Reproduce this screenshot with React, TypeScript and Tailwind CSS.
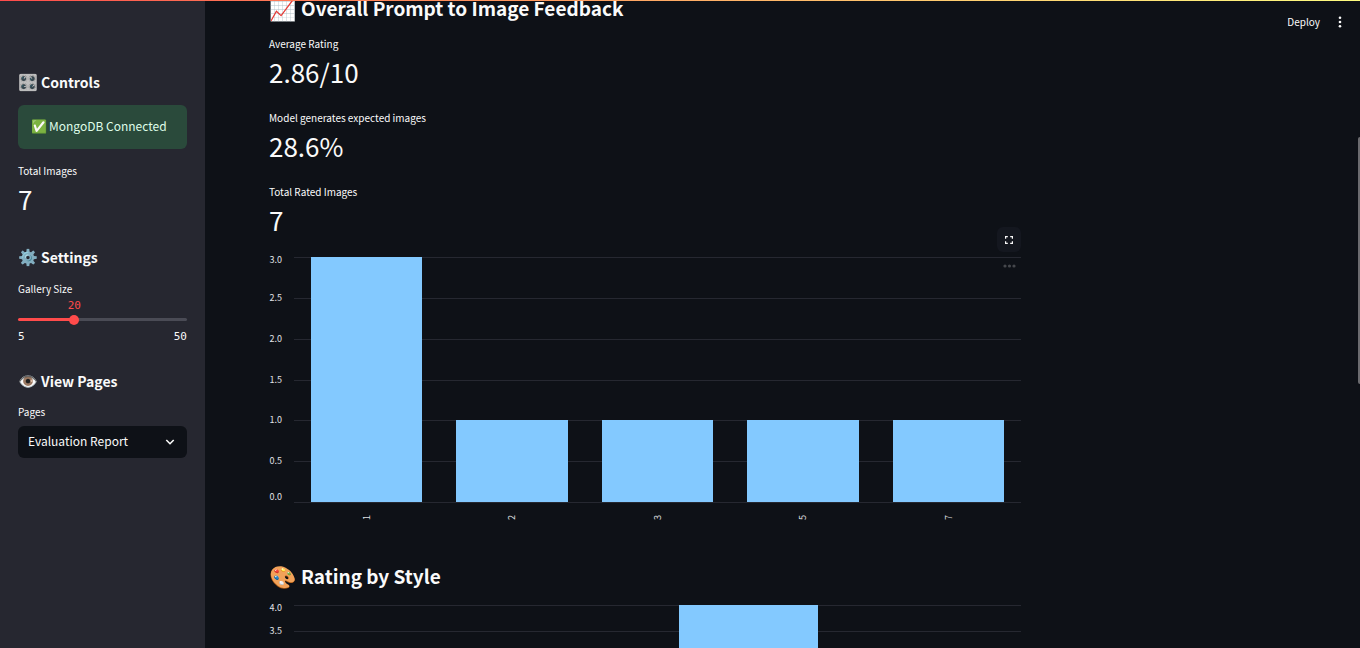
import { useState } from "react";

type Tick = { label: string; y: number; textY: number };
type Bar = { label: string; x: number; width: number; y: number };

const ratingTicks: Tick[] = [
  { label: "3.0", y: 7, textY: 13 },
  { label: "2.5", y: 48, textY: 51 },
  { label: "2.0", y: 89, textY: 92 },
  { label: "1.5", y: 130, textY: 133 },
  { label: "1.0", y: 170, textY: 173 },
  { label: "0.5", y: 211, textY: 214 },
  { label: "0.0", y: 252, textY: 250 },
];

const ratingBars: Bar[] = [
  { label: "1", x: 42, width: 111, y: 7 },
  { label: "2", x: 187, width: 112, y: 170 },
  { label: "3", x: 333, width: 111, y: 170 },
  { label: "5", x: 478, width: 112, y: 170 },
  { label: "7", x: 624, width: 111, y: 170 },
];

const styleTicks: Tick[] = [
  { label: "4.0", y: 7, textY: 13 },
  { label: "3.5", y: 33, textY: 36 },
];

const styleBars: Bar[] = [{ label: "", x: 410, width: 139, y: 7 }];

function BarChart({ title, ticks, bars, base, height }: { title: string; ticks: Tick[]; bars: Bar[]; base: number; height: number }) {
  return (
    <svg role="img" aria-label={title} viewBox={`0 0 752 ${height}`} className="block w-full">
      {ticks.map((t) => (
        <g key={t.label}>
          <rect x="25" y={t.y} width="727" height="1" fill="#262831" />
          <text x="13" y={t.textY} textAnchor="end" fontSize="9" fill="#e0e1e6">
            {t.label}
          </text>
        </g>
      ))}
      {bars.map((b) => (
        <g key={b.x}>
          <rect x={b.x} y={b.y} width={b.width} height={base - b.y} fill="#83c9ff" />
          {b.label && (
            <text
              transform={`translate(${b.x + b.width / 2 + 3} ${base + 13}) rotate(-90)`}
              textAnchor="end"
              fontSize="9"
              fill="#e0e1e6"
            >
              {b.label}
            </text>
          )}
        </g>
      ))}
    </svg>
  );
}

function Metric({ label, value }: { label: string; value: string }) {
  return (
    <div>
      <p className="text-[10px] leading-[22px]">{label}</p>
      <p className="text-[26px] leading-[34px]">{value}</p>
    </div>
  );
}

function SideHeading({ icon, children }: { icon: string; children: string }) {
  return (
    <h3 className="flex h-6 items-center gap-[3px] text-sm leading-6 font-semibold">
      <span className="w-5 pb-[2px] text-[16px]">{icon}</span>
      {children}
    </h3>
  );
}

function SectionHeading({ icon, children }: { icon: string; children: string }) {
  return (
    <h2 className="flex h-8 items-center gap-1 text-[19px] leading-8 font-semibold">
      <span className="w-7 pb-[3px] text-[22px]">{icon}</span>
      {children}
    </h2>
  );
}

export default function App() {
  const [size, setSize] = useState(20);
  const filled = ((size - 5) / 45) * 100;

  return (
    <div className="relative flex h-screen overflow-hidden bg-[#0e1117] font-['Noto_Sans_CJK_SC','Noto_Sans',sans-serif] text-[#fafafa]">
      <aside className="w-[205px] shrink-0 bg-[#262730] px-[18px] pt-[70px]">
        <SideHeading icon="🎛️">Controls</SideHeading>
        <p className="mt-[11px] flex h-11 items-center gap-px rounded-md bg-[#2a4a3b] px-[13px] pb-[2px] text-xs text-[#dffde9]">
          <span className="w-[17px] text-[13px]">✅</span>MongoDB Connected
        </p>
        <div className="mt-[11px]">
          <Metric label="Total Images" value="7" />
        </div>
        <div className="mt-[29px]">
          <SideHeading icon="⚙️">Settings</SideHeading>
        </div>
        <label htmlFor="gallery" className="mt-2 block text-[10px] leading-6">
          Gallery Size
        </label>
        <output htmlFor="gallery" className="-mt-[3px] block w-2/3 text-center font-['DejaVu_Sans_Mono',monospace] text-[11px] leading-4 text-[#ff4b4b]">
          {size}
        </output>
        <div
          style={{ backgroundImage: `linear-gradient(to right, #ff4b4b ${filled}%, #4a4b55 ${filled}%)` }}
          className="mt-1 flex h-[3px] items-center rounded-full"
        >
          <input
            id="gallery"
            type="range"
            min={5}
            max={50}
            value={size}
            onChange={(e) => setSize(Number(e.target.value))}
            className="-mx-[5px] block h-[10px] min-w-0 flex-1 appearance-none bg-transparent [&::-webkit-slider-thumb]:size-[10px] [&::-webkit-slider-thumb]:appearance-none [&::-webkit-slider-thumb]:rounded-full [&::-webkit-slider-thumb]:bg-[#ff4b4b]"
          />
        </div>
        <div className="mt-2 flex justify-between font-['DejaVu_Sans_Mono',monospace] text-[11px] leading-4">
          <span>5</span>
          <span>50</span>
        </div>
        <div className="mt-6">
          <SideHeading icon="👁️">View Pages</SideHeading>
        </div>
        <label htmlFor="pages" className="mt-[9px] block text-[10px] leading-5">
          Pages
        </label>
        <div className="relative mt-1">
          <select id="pages" className="block h-8 w-full appearance-none rounded-md bg-[#0e1117] px-[10px] pb-[2px] text-xs">
            <option>Evaluation Report</option>
          </select>
          <svg viewBox="0 0 10 10" className="pointer-events-none absolute top-[11px] right-3 size-[10px]" fill="none" stroke="#fafafa" strokeWidth="1.6">
            <path d="M1.3 3 5 6.7 8.7 3" />
          </svg>
        </div>
      </aside>

      <main className="min-w-0 flex-1 px-16">
        <div className="-mt-2 max-w-[752px]">
          <SectionHeading icon="📈">Overall Prompt to Image Feedback</SectionHeading>
          <div className="mt-[9px] flex flex-col gap-[18px]">
            <Metric label="Average Rating" value="2.86/10" />
            <Metric label="Model generates expected images" value="28.6%" />
            <Metric label="Total Rated Images" value="7" />
          </div>
          <div className="relative mt-[13px]">
            <BarChart title="Ratings" ticks={ratingTicks} bars={ratingBars} base={252} height={280} />
            <button type="button" aria-label="Fullscreen" className="absolute -top-[23px] right-0 grid h-[25px] w-6 place-items-center rounded-md bg-[#14171f]">
              <svg viewBox="0 0 8 8" className="size-2" fill="none" stroke="#fafafa" strokeWidth="1.2">
                <path d="M.6 2.8V.6h2.2M5.2.6h2.2v2.2M7.4 5.2v2.2H5.2M2.8 7.4H.6V5.2" />
              </svg>
            </button>
            <button type="button" aria-label="Chart actions" className="absolute top-[14px] right-[5px]">
              <svg viewBox="0 0 13 4" className="block h-1 w-[13px]" fill="#45474c">
                <circle cx="2" cy="2" r="1.6" />
                <circle cx="6.5" cy="2" r="1.6" />
                <circle cx="11" cy="2" r="1.6" />
              </svg>
            </button>
          </div>
          <div className="mt-[30px]">
            <SectionHeading icon="🎨">Rating by Style</SectionHeading>
          </div>
          <div className="mt-[6px]">
            <BarChart title="Rating by Style" ticks={styleTicks} bars={styleBars} base={280} height={300} />
          </div>
        </div>
      </main>

      <div className="absolute top-3 right-[13px] flex items-center gap-[13px]">
        <button type="button" className="text-[10px] leading-5">
          Deploy
        </button>
        <button type="button" aria-label="Main menu">
          <svg viewBox="0 0 14 14" className="block size-[14px]" fill="#fafafa">
            <circle cx="7" cy="2.8" r="1.3" />
            <circle cx="7" cy="7" r="1.3" />
            <circle cx="7" cy="11.2" r="1.3" />
          </svg>
        </button>
      </div>
      <div className="absolute inset-x-0 top-0 h-px bg-linear-to-r from-[#ff4b4b] to-[#fffd80]" />
      <div className="absolute top-[137px] right-0 h-[247px] w-[2px] rounded-l-full bg-[#6b6b6f]" />
    </div>
  );
}
